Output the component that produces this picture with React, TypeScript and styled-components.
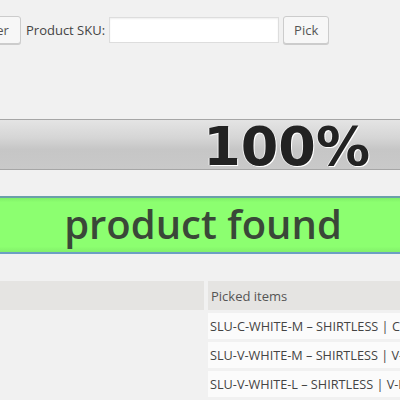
import React, { FC } from 'react'
import styled, { createGlobalStyle } from 'styled-components'

const GlobalStyle = createGlobalStyle`
	html, body {
		margin: 0;
		padding: 0;
		background: #f1f1f1;
		overflow: hidden;
		font-family: "Open Sans", "Noto Sans", sans-serif;
		color: #444;
	}
`

const picked = [
	'SLU-C-WHITE-M – SHIRTLESS | Crew Neck – White – M',
	'SLU-V-WHITE-M – SHIRTLESS | V-Neck – White – M',
	'SLU-V-WHITE-L – SHIRTLESS | V-Neck – White – L',
]

const App: FC = () => {
	return (
		<>
			<GlobalStyle />
			<Page>
				<Toolbar>
					<Button $width={90}>Scan order</Button>
					<Label htmlFor='sku'>Product SKU:</Label>
					<Input id='sku' type='text' />
					<Button>Pick</Button>
				</Toolbar>
				<Progress>
					<span>100%</span>
				</Progress>
				<Notice>product found</Notice>
				<Items>
					<thead>
						<tr>
							<th></th>
							<th>Picked items</th>
						</tr>
					</thead>
					<tbody>
						{picked.map((item) => (
							<tr key={item}>
								<td className='empty'></td>
								<td>{item}</td>
							</tr>
						))}
					</tbody>
				</Items>
			</Page>
		</>
	)
}

const Page = styled.div`
	display: flex;
	flex-direction: column;
	margin-left: -69px;
	width: 720px;
	padding-top: 16px;
`

const Toolbar = styled.div`
	display: flex;
	align-items: center;
	height: 28px;
	gap: 5px;
`

const Button = styled.button<{ $width?: number }>`
	box-sizing: border-box;
	height: 28px;
	${(p) => (p.$width ? `width: ${p.$width}px;` : '')}
	padding: 0 10px;
	margin: 0;
	font-family: "Open Sans", sans-serif;
	font-size: 13px;
	color: #555;
	background: #f7f7f7;
	border: 1px solid #cccccc;
	border-radius: 3px;
	box-shadow: 0 1px 0 #cccccc;
	white-space: nowrap;
	&:last-child {
		margin-left: -1px;
	}
`

const Label = styled.label`
	font-size: 13px;
	color: #444;
	white-space: nowrap;
`

const Input = styled.input`
	box-sizing: border-box;
	width: 170px;
	height: 26px;
	margin: 0 0 0 -1px;
	background: #fff;
	border: 1px solid #dddddd;
	box-shadow: inset 0 1px 2px rgba(0, 0, 0, 0.07);
	outline: none;
`

const Progress = styled.div`
	box-sizing: border-box;
	margin-top: 75px;
	width: 469px;
	height: 51px;
	display: flex;
	align-items: center;
	justify-content: flex-end;
	padding-right: 30px;
	border-top: 1px solid #a6a6a6;
	border-bottom: 1px solid #a6a6a6;
	background: linear-gradient(to bottom, #e4e4e4 0%, #d6d6d6 35%, #c6c6c6 60%, #c9c9c9 100%);
	span {
		font-family: "DejaVu Sans", Verdana, sans-serif;
		font-weight: bold;
		font-size: 54px;
		line-height: 49px;
		color: #222;
		text-shadow: 1px 1px 0 #fff, -1px 0 0 #eee;
		margin-top: 4px;
	}
`

const Notice = styled.div`
	margin-top: 26px;
	margin-left: 69px;
	width: 400px;
	box-sizing: border-box;
	height: 58px;
	border-top: 2px solid #6b9fa9;
	border-bottom: 2px solid #6c9fc2;
	background: linear-gradient(to bottom, #80f068 0%, #8cff70 8%, #8cff70 90%, #82f06a 100%);
	text-align: center;
	font-size: 40px;
	font-weight: 600;
	line-height: 52px;
	color: #3a4838;
	padding-left: 6px;
`

const Items = styled.table`
	margin-top: 24px;
	border-collapse: separate;
	border-spacing: 4px 3px;
	margin-left: -4px;
	width: 740px;
	font-size: 12.7px;
	th {
		height: 29px;
		background: #e5e4e2;
		font-weight: normal;
		text-align: left;
		color: #555;
		padding: 0 3px;
		font-size: 13px;
	}
	th:first-child {
		width: 267px;
	}
	td {
		height: 26px;
		padding: 0 2px;
		background: #fbfbfb;
		white-space: nowrap;
		color: #444;
	}
	td.empty {
		background: transparent;
	}
`

export default App
